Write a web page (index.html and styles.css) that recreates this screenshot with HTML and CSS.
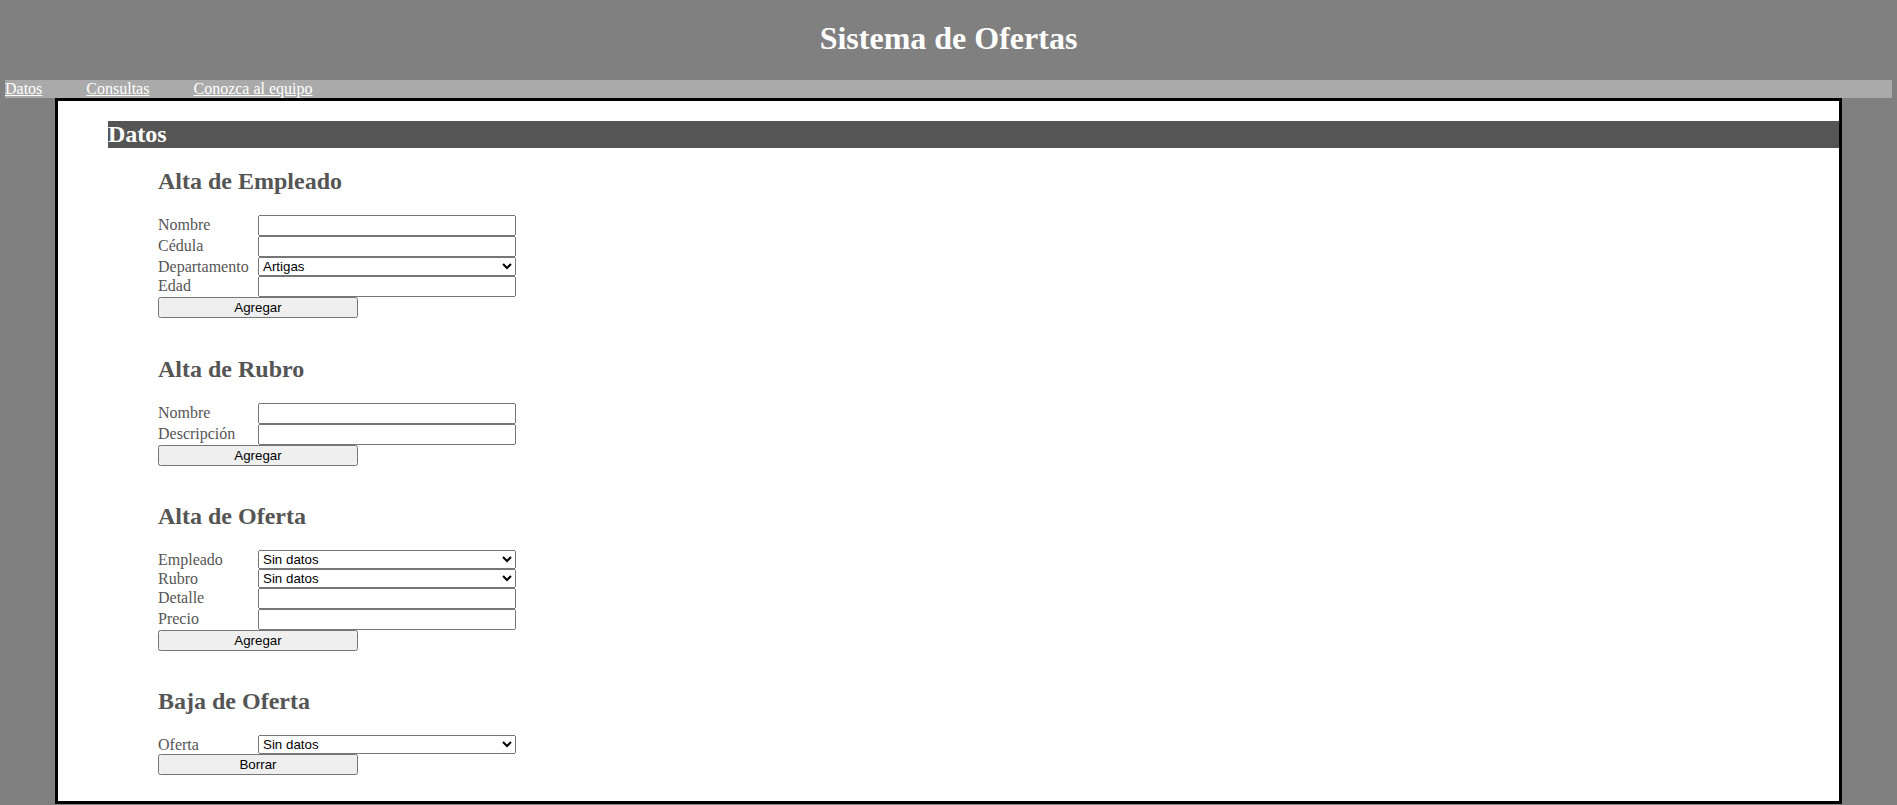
FILE: index.html
```html
<!DOCTYPE html>
<html lang="es">
<head>
<meta charset="utf-8">
<title>Sistema de Ofertas</title>
<link rel="stylesheet" href="styles.css">
</head>
<body>
<header class="site-header">
  <h1 class="site-title">Sistema de Ofertas</h1>
</header>
<nav class="nav">
  <a class="nav-link" href="#">Datos</a>
  <a class="nav-link" href="#">Consultas</a>
  <a class="nav-link" href="#">Conozca al equipo</a>
</nav>
<main class="main">
  <h2 class="bar">Datos</h2>
  <div class="sections">
    <section class="sec">
      <h3 class="sec-title">Alta de Empleado</h3>
      <form class="form">
        <div class="row"><label class="lbl">Nombre</label><input class="ctl" type="text"></div>
        <div class="row"><label class="lbl">Cédula</label><input class="ctl" type="text"></div>
        <div class="row row-sel"><label class="lbl">Departamento</label><select class="ctl sel"><option>Artigas</option></select></div>
        <div class="row"><label class="lbl">Edad</label><input class="ctl" type="text"></div>
        <button class="btn" type="button">Agregar</button>
      </form>
    </section>
    <section class="sec sec-after-first">
      <h3 class="sec-title">Alta de Rubro</h3>
      <form class="form">
        <div class="row"><label class="lbl">Nombre</label><input class="ctl" type="text"></div>
        <div class="row"><label class="lbl">Descripción</label><input class="ctl" type="text"></div>
        <button class="btn" type="button">Agregar</button>
      </form>
    </section>
    <section class="sec">
      <h3 class="sec-title">Alta de Oferta</h3>
      <form class="form">
        <div class="row row-sel"><label class="lbl">Empleado</label><select class="ctl sel"><option>Sin datos</option></select></div>
        <div class="row row-sel"><label class="lbl">Rubro</label><select class="ctl sel"><option>Sin datos</option></select></div>
        <div class="row"><label class="lbl">Detalle</label><input class="ctl" type="text"></div>
        <div class="row"><label class="lbl">Precio</label><input class="ctl" type="text"></div>
        <button class="btn" type="button">Agregar</button>
      </form>
    </section>
    <section class="sec">
      <h3 class="sec-title">Baja de Oferta</h3>
      <form class="form">
        <div class="row row-sel"><label class="lbl">Oferta</label><select class="ctl sel"><option>Sin datos</option></select></div>
        <button class="btn" type="button">Borrar</button>
      </form>
    </section>
  </div>
</main>
</body>
</html>
```
FILE: styles.css
```css
html {
  background: #808080;
}
body {
  margin: 0 5px;
  background: #808080;
  font-family: "Liberation Serif", "Times New Roman", serif;
  font-size: 16px;
}
.site-header {
  padding: 20px 0 24px;
  text-align: center;
}
.site-title {
  margin: 0;
  font-size: 32px;
  line-height: 36px;
  font-weight: bold;
  color: #fff;
}
.nav {
  display: flex;
  gap: 44px;
  height: 18px;
  line-height: 18px;
  background: #aaaaaa;
}
.nav-link {
  color: #fff;
  text-decoration: underline;
}
.main {
  margin: 0 50px;
  background: #fff;
  border: 3px solid #000;
  padding: 20px 0 26px 50px;
}
.bar {
  margin: 0;
  background: #555555;
  color: #fff;
  font-size: 24px;
  line-height: 27px;
  font-weight: bold;
}
.sections {
  display: flex;
  flex-direction: column;
  gap: 37px;
  margin-top: 20px;
  margin-left: 50px;
}
.sec-after-first {
  margin-top: 1px;
}
.sec-title {
  margin: 0 0 20px;
  font-size: 24px;
  line-height: 27px;
  font-weight: bold;
  color: #555;
}
.form {
  margin: 0;
}
.row {
  display: flex;
  align-items: flex-start;
  height: 21px;
}
.row-sel {
  height: 19px;
}
.lbl {
  flex: none;
  width: 100px;
  padding-top: 1px;
  line-height: 18px;
  color: #555;
}
.ctl {
  box-sizing: border-box;
  width: 258px;
  height: 21px;
  margin: 0;
  font-family: "Liberation Sans", Arial, sans-serif;
  font-size: 13.333px;
  color: #000;
}
.sel {
  height: 19px;
}
.btn {
  display: block;
  box-sizing: border-box;
  width: 200px;
  height: 21px;
  margin: 0;
  font-family: "Liberation Sans", Arial, sans-serif;
  font-size: 13.333px;
  color: #000;
}
```
